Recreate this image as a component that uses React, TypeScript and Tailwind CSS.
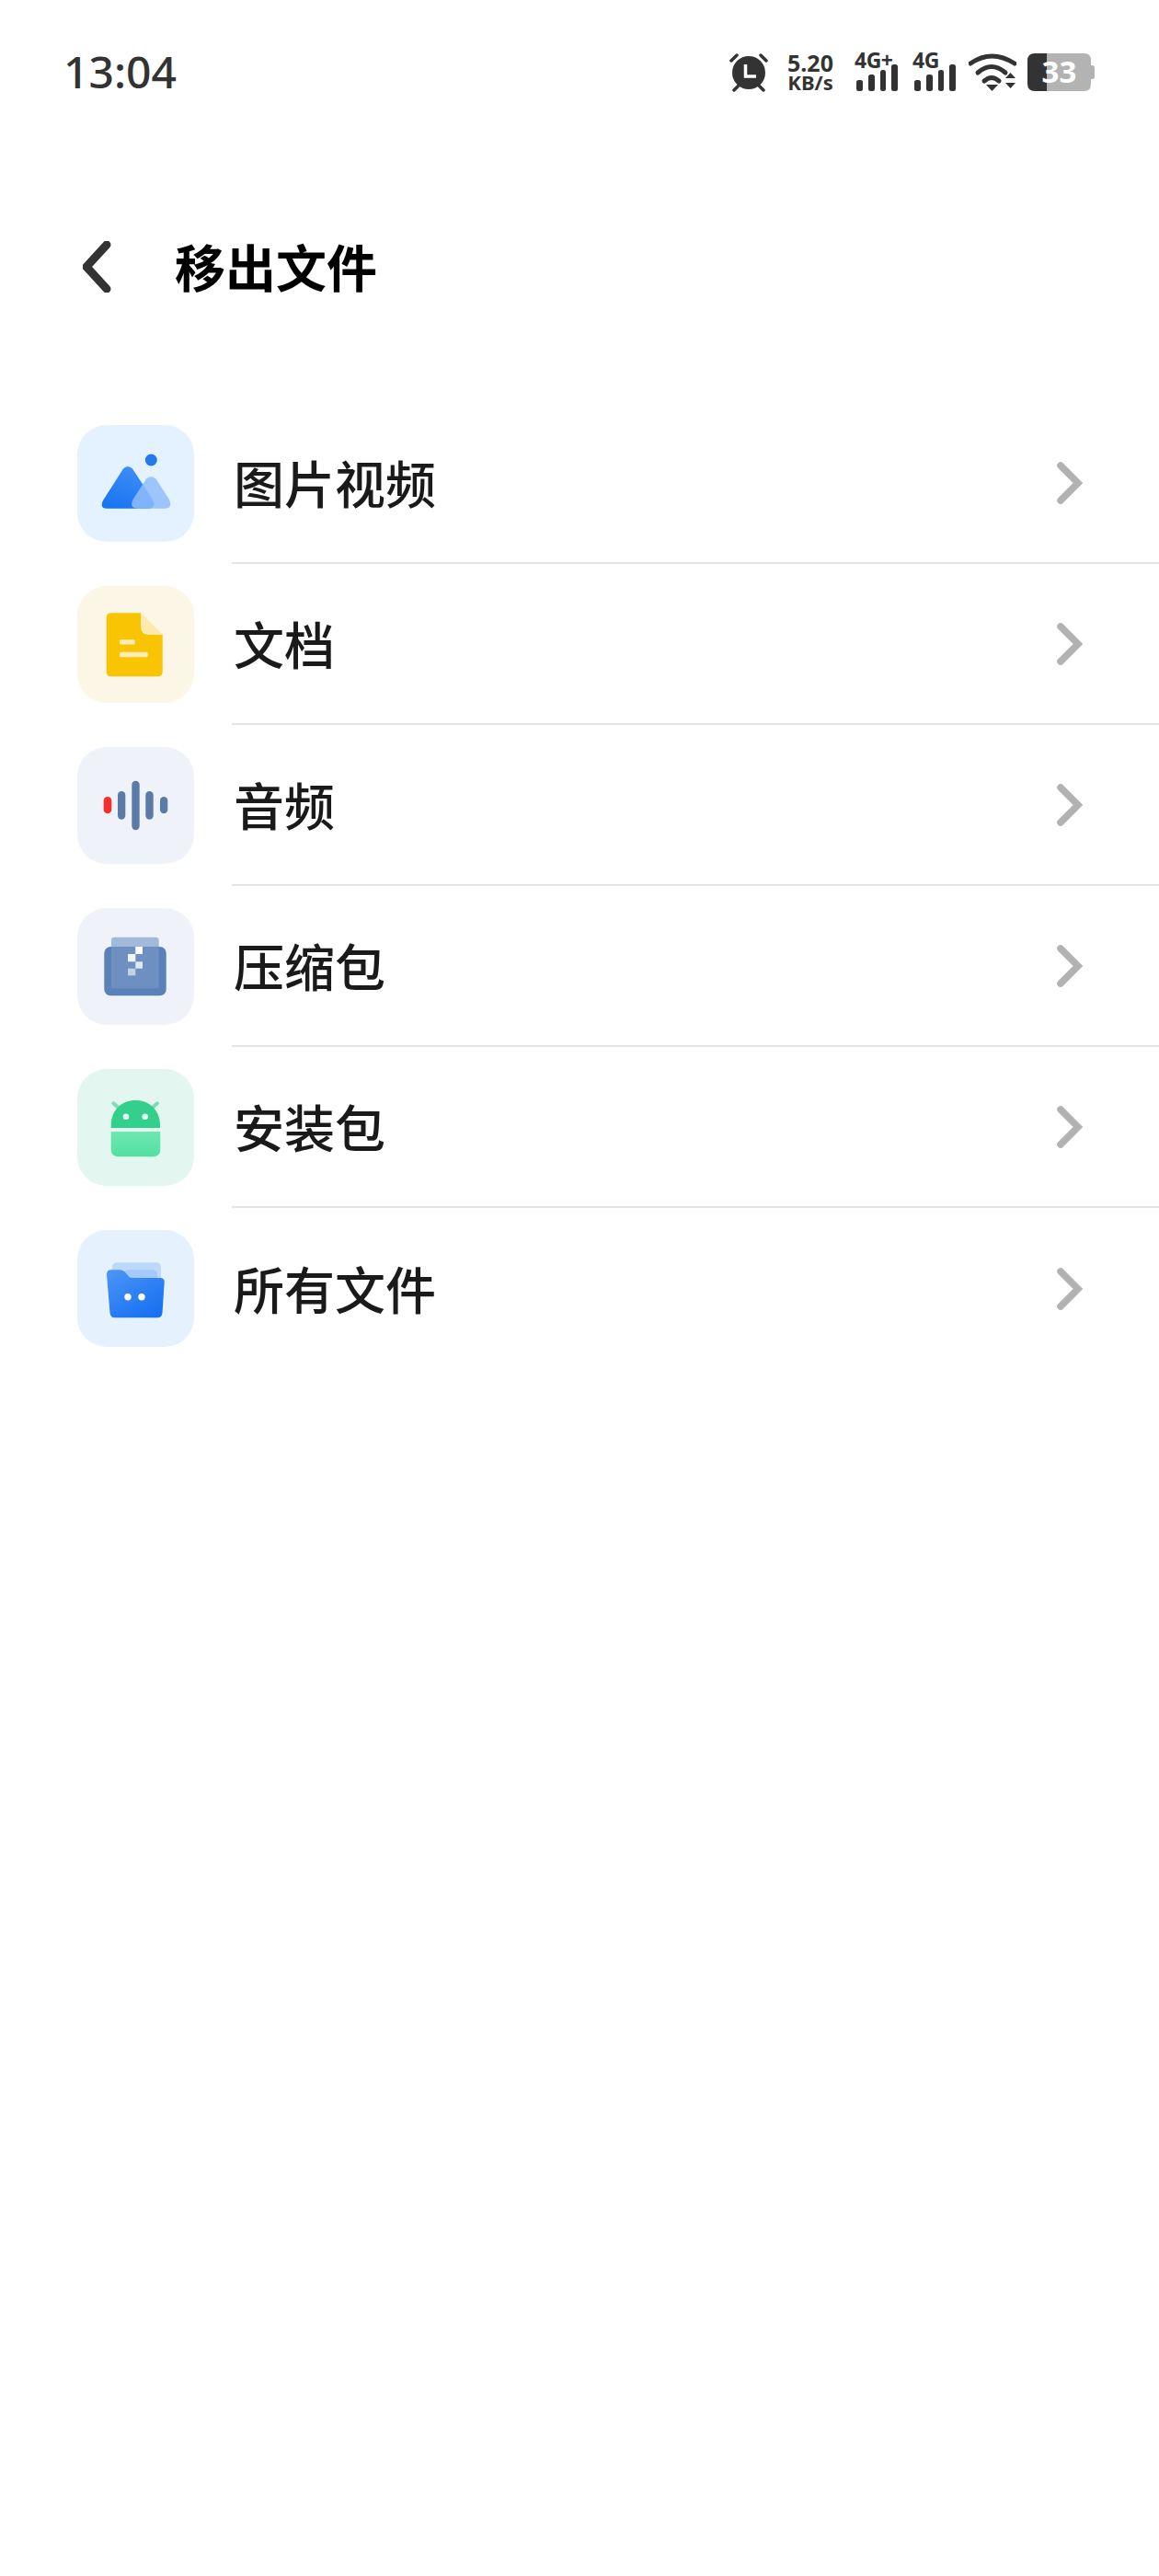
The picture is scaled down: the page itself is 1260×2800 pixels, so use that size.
import type { ReactNode } from "react";

const FONT = "font-['Noto_Sans','Noto_Sans_CJK_SC',sans-serif]";

function Tile({ bg, children }: { bg: string; children: ReactNode }) {
  return (
    <div className={`h-[127px] w-[127px] shrink-0 rounded-[32px] ${bg}`}>
      <svg viewBox="0 0 127 127" className="h-full w-full">
        {children}
      </svg>
    </div>
  );
}

function PhotoIcon() {
  return (
    <Tile bg="bg-[#e4f2ff]">
      <defs>
        <linearGradient id="mt" x1="0.7" y1="0" x2="0.3" y2="1">
          <stop offset="0" stopColor="#3f8ff5" />
          <stop offset="1" stopColor="#1a75f2" />
        </linearGradient>
      </defs>
      <circle cx="80.3" cy="38" r="6.5" fill="#2479ee" />
      <path d="M50 47.5Q55 42.5 60 47.5L82 81Q86.500 90.700 77 90.700H32Q24 90.700 28 82Z" fill="url(#mt)" />
      <path d="M75 58.500Q80.300 54 85.500 58.500L100 81Q104 90.700 95 90.700H66Q56 90.700 60.500 81Z" fill="#8fbdfb" fillOpacity="0.85" />
    </Tile>
  );
}

function DocIcon() {
  return (
    <Tile bg="bg-[#fcf6e6]">
      <path d="M36.700 29.300H69.300V44Q69.300 52.700 78 52.700H92.700V93.300Q92.700 98.300 87.700 98.300H36.700Q31.700 98.300 31.700 93.300V34.300Q31.700 29.300 36.700 29.300Z" fill="#f8c404" />
      <path d="M70.500 30.500L92 52H78Q70.500 52 70.500 44Z" fill="#fde9ab" />
      <rect x="46" y="58.300" width="16.700" height="5.300" rx="1.500" fill="#fdeeb8" />
      <rect x="46" y="71.700" width="30.700" height="5.600" rx="1.500" fill="#fdeeb8" />
    </Tile>
  );
}

function AudioIcon() {
  return (
    <Tile bg="bg-[#eff3f9]">
      <rect x="28.700" y="54" width="8.600" height="18.300" rx="4.300" fill="#f5302a" />
      <rect x="44" y="48" width="8.300" height="30.700" rx="4.150" fill="#5a7ba8" />
      <rect x="59.300" y="36.700" width="8.400" height="53.600" rx="4.200" fill="#5a7ba8" />
      <rect x="74.300" y="48" width="8.400" height="30.700" rx="4.200" fill="#5a7ba8" />
      <rect x="90" y="54" width="8.300" height="18.300" rx="4.150" fill="#5a7ba8" />
    </Tile>
  );
}

function ZipIcon() {
  return (
    <Tile bg="bg-[#eff3f9]">
      <path d="M37 35Q37 31.700 40.500 31.700H85Q88.700 31.700 88.700 35V44H37Z" fill="#a3b9da" />
      <rect x="29.300" y="42" width="67.400" height="53.300" rx="7" fill="#5a82b8" />
      <rect x="37" y="42" width="51.700" height="45.300" fill="#6e90c0" />
      <rect x="63.300" y="42" width="7.700" height="8" fill="#ffffff" />
      <rect x="55" y="50" width="8.300" height="8.300" fill="#eef3f9" />
      <rect x="63.300" y="58.300" width="7.700" height="7.400" fill="#dfe7f2" />
      <rect x="55" y="65.700" width="8.300" height="7.600" fill="#c3d1e4" />
    </Tile>
  );
}

function ApkIcon() {
  return (
    <Tile bg="bg-[#e3f6f0]">
      <defs>
        <linearGradient id="apk" x1="0" y1="0" x2="0" y2="1">
          <stop offset="0" stopColor="#6fe7b2" />
          <stop offset="1" stopColor="#52e0a0" />
        </linearGradient>
      </defs>
      <line x1="39.300" y1="37.300" x2="45.300" y2="42.500" stroke="#7fdcb3" strokeWidth="4" strokeLinecap="round" />
      <line x1="87" y1="37.300" x2="81" y2="42.500" stroke="#7fdcb3" strokeWidth="4" strokeLinecap="round" />
      <path d="M36.700 64V61.500C36.700 44 49 34 63.300 34S90 44 90 61.500V64Z" fill="#33d08d" />
      <circle cx="53" cy="51.700" r="3.300" fill="#e3f6f0" />
      <circle cx="73.700" cy="51.700" r="3.300" fill="#e3f6f0" />
      <path d="M36.700 68H90.300V87Q90.300 95.300 82 95.300H45Q36.700 95.300 36.700 87Z" fill="url(#apk)" />
    </Tile>
  );
}

function FolderIcon() {
  return (
    <Tile bg="bg-[#e5f2fe]">
      <defs>
        <linearGradient id="fd" x1="0.1" y1="0" x2="0.8" y2="1">
          <stop offset="0" stopColor="#4a94f6" />
          <stop offset="1" stopColor="#1670f2" />
        </linearGradient>
      </defs>
      <rect x="38" y="35.300" width="53" height="30" rx="5" fill="#bcd9fb" />
      <rect x="50" y="43.300" width="37" height="20" rx="5" fill="#a3cafa" />
      <path d="M36.500 43.300H46Q50 43.300 53 47L55 49.500Q57 52 60 52H90Q95 52 94.700 57L92.500 90Q92 95.300 87 95.300H41Q36 95.300 35.500 90L32 48.500Q32 43.300 36.500 43.300Z" fill="url(#fd)" />
      <circle cx="55" cy="72.700" r="3.700" fill="#ffffff" />
      <circle cx="70" cy="72.700" r="3.700" fill="#ffffff" />
    </Tile>
  );
}

function AlarmIcon() {
  return (
    <svg width="44" height="44" viewBox="0 0 42 44" className="shrink-0" fill="#333333">
      <circle cx="21" cy="23" r="18" />
      <path d="M17.500 14V27H29" fill="none" stroke="#ffffff" strokeWidth="3.500" />
      <path d="M2 10L8 4M40 10L34 4M5 42L10 37M37 42L32 37" stroke="#333333" strokeWidth="3.500" strokeLinecap="round" />
    </svg>
  );
}

function SignalBars() {
  const bars = [12, 18, 23, 29];
  return (
    <div className="flex h-[29px] items-end gap-[6px]">
      {bars.map((h, i) => (
        <div key={i} className="w-[7.500px] rounded-[2.500px] bg-[#333333]" style={{ height: h }} />
      ))}
    </div>
  );
}

function Network({ label }: { label: string }) {
  return (
    <div className="flex w-[47px] flex-col">
      <span className="h-[16px] text-[23px] leading-[16px] font-bold tracking-[-0.5px] text-[#333333]">{label}</span>
      <div className="mt-[-3px] ml-[2px]">
        <SignalBars />
      </div>
    </div>
  );
}

function WifiIcon() {
  return (
    <svg width="52" height="42" viewBox="0 0 52 42" className="shrink-0" fill="none" stroke="#333333" strokeWidth="5">
      <path d="M2 12Q25 -4 50 12" strokeLinecap="round" />
      <path d="M10 22Q25 9 40 22" strokeLinecap="round" />
      <path d="M17 31Q25 24 33 31" strokeLinecap="round" />
      <path d="M19 35H32L25.500 42Z" fill="#333333" stroke="none" />
      <path d="M40 28L45.500 22L51 28ZM40 33L45.500 39L51 33Z" fill="#333333" stroke="none" />
    </svg>
  );
}

function Battery() {
  return (
    <div className="relative h-[41px] w-[73px] shrink-0">
      <svg width="73" height="41" viewBox="0 0 73 41">
        <path d="M8 0H21V41H8Q0 41 0 33V8Q0 0 8 0Z" fill="#333333" />
        <path d="M21 0H62Q69 0 69 8V33Q69 41 62 41H21Z" fill="#b3b3b3" />
        <path d="M69 13H70Q73 13 73 16V25Q73 28 70 28H69Z" fill="#b3b3b3" />
      </svg>
      <span className="absolute top-0 left-0 flex h-[41px] w-[69px] items-center justify-center text-[33px] font-bold text-white">33</span>
    </div>
  );
}

function StatusBar() {
  return (
    <div className="flex h-[156px] items-center justify-between pr-[70px] pl-[69px]">
      <span className="text-[48px] leading-none font-medium text-[#333333]">13:04</span>
      <div className="flex items-center gap-[14px]">
        <div className="flex items-center gap-[18px]">
          <AlarmIcon />
          <div className="mr-[3px] flex w-[54px] flex-col items-center font-bold text-[#333333]">
            <span className="text-[25px] leading-[22px]">5.20</span>
            <span className="text-[22px] leading-[20px]">KB/s</span>
          </div>
          <div className="flex items-center gap-[16px]">
            <Network label="4G+" />
            <Network label="4G" />
          </div>
        </div>
        <div className="flex items-center gap-[12px]">
          <WifiIcon />
          <Battery />
        </div>
      </div>
    </div>
  );
}

function Chevron() {
  return (
    <svg width="28" height="46" viewBox="0 0 28 46" className="shrink-0" fill="none" stroke="#b2b2b2" strokeWidth="7.500" strokeLinecap="round" strokeLinejoin="miter">
      <path d="M4 4L23 23L4 42" />
    </svg>
  );
}

const rows: { label: string; icon: ReactNode }[] = [
  { label: "图片视频", icon: <PhotoIcon /> },
  { label: "文档", icon: <DocIcon /> },
  { label: "音频", icon: <AudioIcon /> },
  { label: "压缩包", icon: <ZipIcon /> },
  { label: "安装包", icon: <ApkIcon /> },
  { label: "所有文件", icon: <FolderIcon /> },
];

export default function App() {
  return (
    <div className={`min-h-[2800px] bg-white ${FONT}`}>
      <StatusBar />

      <div className="flex h-[268px] items-center pl-[90px]">
        <svg width="40" height="56" viewBox="0 0 40 56" className="shrink-0" fill="none" stroke="#333333" strokeWidth="9" strokeLinecap="round">
          <path d="M26 4L4 28L26 52" />
        </svg>
        <h1 className="ml-[60px] text-[55px] leading-none font-bold text-black">移出文件</h1>
      </div>

      <ul className="pt-[14px]">
        {rows.map((row, i) => (
          <li key={row.label} className="flex h-[175px] items-center pl-[84px]">
            {row.icon}
            <div className={`ml-[41px] flex h-full flex-1 items-center justify-between pr-[83px] pl-[2px] ${i < rows.length - 1 ? "border-b-2 border-[#e4e4e4]" : ""}`}>
              <span className="mt-[2px] text-[55px] leading-none font-medium text-[#1a1a1a]">{row.label}</span>
              <Chevron />
            </div>
          </li>
        ))}
      </ul>
    </div>
  );
}
